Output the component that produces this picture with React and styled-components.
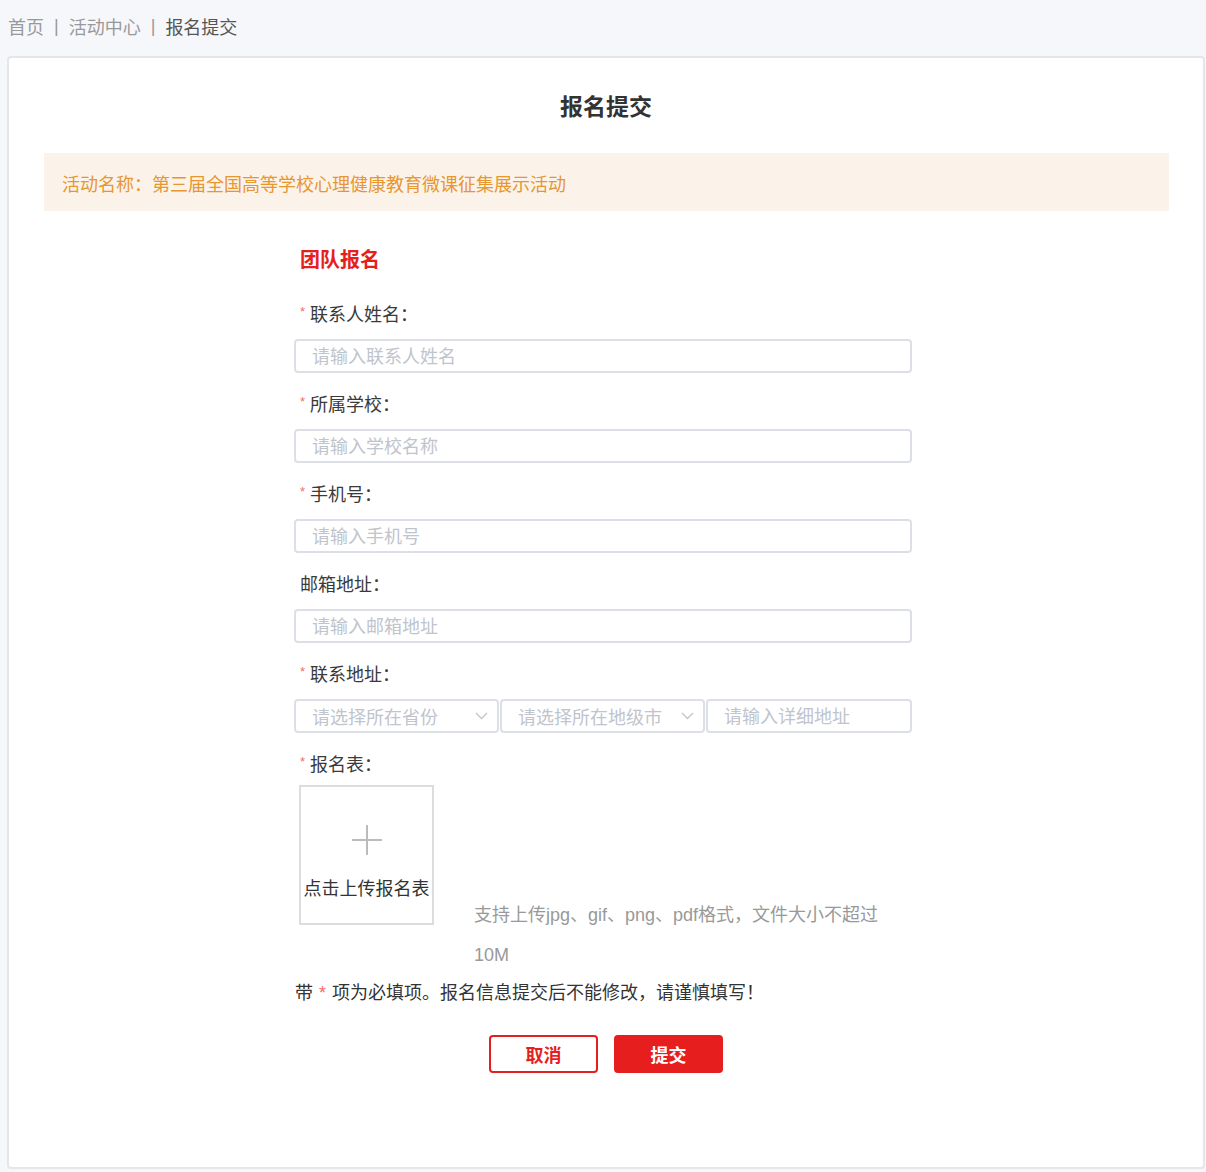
import React from "react";
import styled, { createGlobalStyle } from "styled-components";

const GlobalStyle = createGlobalStyle`
  html, body {
    margin: 0;
    padding: 0;
    background: #f6f7fb;
    font-family: "Liberation Sans", "Noto Sans CJK SC", sans-serif;
  }
  * { box-sizing: border-box; }
`;

const Page = styled.div`
  width: 1206px;
  min-height: 1172px;
  background: #f6f7fb;
  padding-bottom: 3px;
`;

const Breadcrumb = styled.nav`
  height: 52px;
  display: flex;
  align-items: center;
  padding: 0 8px;
  font-size: 18px;
  color: #999;
`;

const Crumb = styled.span`
  color: ${(p) => (p.$active ? "#555" : "#999")};
`;

const Sep = styled.span`
  margin: 0 10px;
  color: #999;
`;

const Card = styled.section`
  margin: 4px 1px 0 7px;
  height: 1113px;
  background: #fff;
  border: 2px solid #e6e6e8;
  border-radius: 4px;
  padding-top: 32px;
`;

const Title = styled.h1`
  margin: 0;
  text-align: center;
  font-size: 23px;
  line-height: 34px;
  font-weight: 700;
  color: #333;
`;

const Banner = styled.div`
  margin: 29px 34px 0 35px;
  height: 58px;
  display: flex;
  align-items: center;
  padding-left: 18px;
  padding-top: 1px;
  background: #fbf3ea;
  color: #e8962f;
  font-size: 18px;
`;

const Form = styled.div`
  margin-left: 285px;
  width: 618px;
`;

const SectionTitle = styled.h2`
  margin: 35px 0 0;
  padding-left: 6px;
  font-size: 20px;
  line-height: 28px;
  font-weight: 700;
  color: #e61e1e;
`;

const Field = styled.div`
  margin-top: ${(p) => (p.$first ? "28px" : "19px")};
`;

const Label = styled.div`
  padding-left: 6px;
  padding-top: 1px;
  height: 24px;
  font-size: 18px;
  line-height: 24px;
  color: #3a3a3a;
  display: flex;
  align-items: center;
`;

const Star = styled.span`
  color: #f56c6c;
  font-size: 13px;
  margin-right: 5px;
  position: relative;
  top: -3px;
`;

const Input = styled.input`
  display: block;
  margin-top: 13px;
  width: 100%;
  height: 34px;
  border: 2px solid #dcdfe6;
  border-radius: 4px;
  padding: 3px 16px 0;
  font-size: 18px;
  font-family: inherit;
  color: #333;
  outline: none;
  &::placeholder {
    color: #c0c4cc;
  }
`;

const AddressRow = styled.div`
  margin-top: 13px;
  display: grid;
  grid-template-columns: 205px 205px 206px;
  gap: 1px;
`;

const SelectBox = styled.div`
  height: 34px;
  border: 2px solid #dcdfe6;
  border-radius: 4px;
  padding: 0 9px 0 16px;
  display: flex;
  align-items: center;
  justify-content: space-between;
  font-size: 18px;
  color: #c0c4cc;
`;

const AddressInput = styled(Input)`
  margin-top: 0;
`;

const UploadRow = styled.div`
  margin-top: 9px;
  padding-left: 5px;
  display: flex;
  align-items: flex-start;
`;

const UploadBox = styled.div`
  width: 135px;
  height: 140px;
  border: 2px solid #dddddd;
  display: flex;
  flex-direction: column;
  align-items: center;
  padding-top: 38px;
  flex-shrink: 0;
`;

const UploadText = styled.div`
  margin-top: 22px;
  font-size: 18px;
  line-height: 24px;
  color: #333;
  white-space: nowrap;
`;

const Hint = styled.div`
  margin-top: 110px;
  margin-left: 40px;
  width: 420px;
  font-size: 18px;
  line-height: 40px;
  color: #999;
`;

const Note = styled.p`
  margin: 6px 0 0 1px;
  font-size: 18px;
  line-height: 24px;
  color: #333;
`;

const NoteStar = styled.span`
  color: #f56c6c;
  margin: 0 6px;
`;

const Actions = styled.div`
  margin-top: 30px;
  display: flex;
  justify-content: center;
  gap: 16px;
`;

const Button = styled.button`
  width: 109px;
  height: 38px;
  border-radius: 4px;
  border: 2px solid #e61e1e;
  background: ${(p) => (p.$primary ? "#e61e1e" : "#fff")};
  color: ${(p) => (p.$primary ? "#fff" : "#e61e1e")};
  font-size: 18px;
  font-weight: 700;
  font-family: inherit;
  cursor: pointer;
`;

const Chevron = () => (
  <svg width="13" height="8" viewBox="0 0 13 8" fill="none">
    <path d="M1 1l5.5 5.5L12 1" stroke="#c0c4cc" strokeWidth="1.3" />
  </svg>
);

const Plus = () => (
  <svg width="30" height="30" viewBox="0 0 30 30">
    <path d="M15 0v30M0 15h30" stroke="#bbb" strokeWidth="2" />
  </svg>
);

const fields = [
  { label: "联系人姓名", required: true, placeholder: "请输入联系人姓名" },
  { label: "所属学校", required: true, placeholder: "请输入学校名称" },
  { label: "手机号", required: true, placeholder: "请输入手机号" },
  { label: "邮箱地址", required: false, placeholder: "请输入邮箱地址" },
];

export default function App() {
  return (
    <Page>
      <GlobalStyle />
      <Breadcrumb>
        <Crumb>首页</Crumb>
        <Sep>|</Sep>
        <Crumb>活动中心</Crumb>
        <Sep>|</Sep>
        <Crumb $active>报名提交</Crumb>
      </Breadcrumb>
      <Card>
        <Title>报名提交</Title>
        <Banner>活动名称：第三届全国高等学校心理健康教育微课征集展示活动</Banner>
        <Form>
          <SectionTitle>团队报名</SectionTitle>
          {fields.map((f, i) => (
            <Field key={f.label} $first={i === 0}>
              <Label>
                {f.required && <Star>*</Star>}
                {f.label}：
              </Label>
              <Input placeholder={f.placeholder} />
            </Field>
          ))}
          <Field>
            <Label>
              <Star>*</Star>联系地址：
            </Label>
            <AddressRow>
              <SelectBox>
                请选择所在省份
                <Chevron />
              </SelectBox>
              <SelectBox>
                请选择所在地级市
                <Chevron />
              </SelectBox>
              <AddressInput placeholder="请输入详细地址" />
            </AddressRow>
          </Field>
          <Field>
            <Label>
              <Star>*</Star>报名表：
            </Label>
            <UploadRow>
              <UploadBox>
                <Plus />
                <UploadText>点击上传报名表</UploadText>
              </UploadBox>
              <Hint>支持上传jpg、gif、png、pdf格式，文件大小不超过10M</Hint>
            </UploadRow>
          </Field>
          <Note>
            带<NoteStar>*</NoteStar>项为必填项。报名信息提交后不能修改，请谨慎填写！
          </Note>
        </Form>
        <Actions>
          <Button>取消</Button>
          <Button $primary>提交</Button>
        </Actions>
      </Card>
    </Page>
  );
}
